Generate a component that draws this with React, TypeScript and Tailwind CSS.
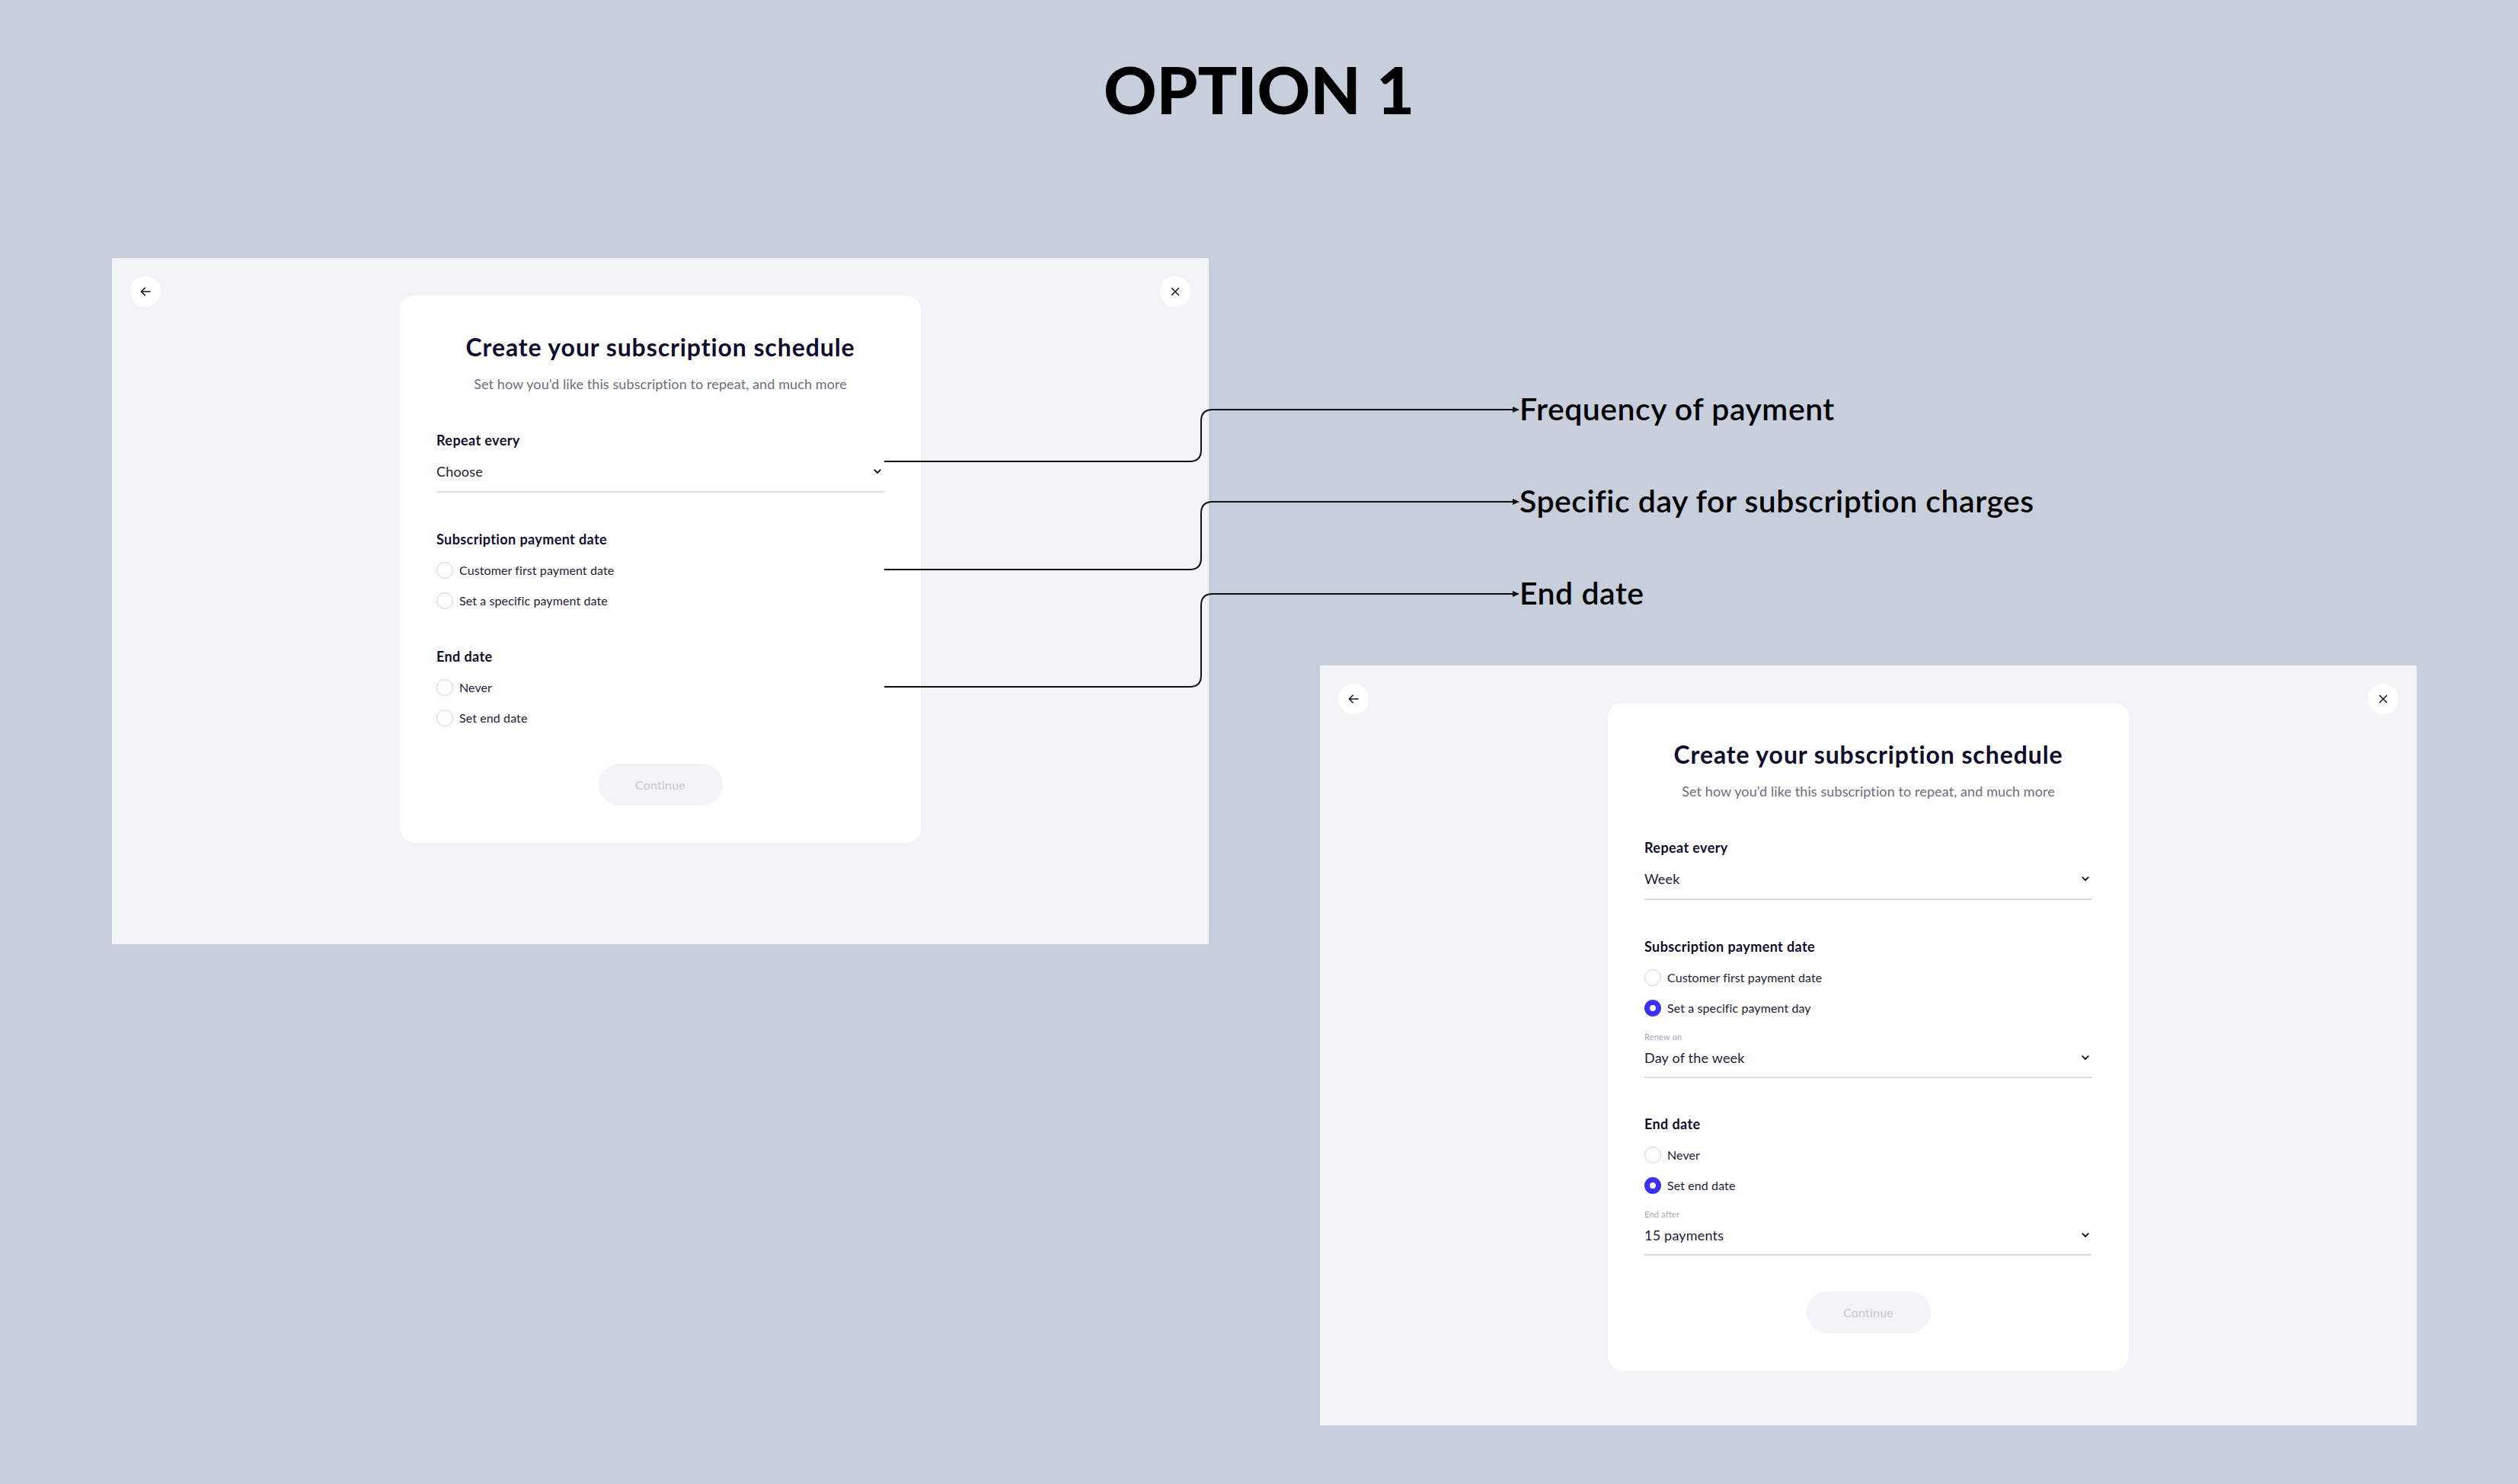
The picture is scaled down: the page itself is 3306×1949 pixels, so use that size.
import React from "react";

function Chevron() {
  return (
    <svg width="10" height="7" viewBox="0 0 10 7" className="mr-[4px] shrink-0">
      <path d="M1.2 1.2 L5 5 L8.8 1.2" fill="none" stroke="#15132e" strokeWidth="1.8" strokeLinecap="round" strokeLinejoin="round" />
    </svg>
  );
}

function Radio({ checked, label }: { checked?: boolean; label: string }) {
  return (
    <div className="flex items-center gap-[8px] h-[24px]">
      {checked ? (
        <span className="block w-[22px] h-[22px] shrink-0 rounded-full border-[7px] border-[#3b30f4] bg-white" />
      ) : (
        <span className="block w-[22px] h-[22px] shrink-0 rounded-full border border-[#cdd2df] bg-white" />
      )}
      <span className="text-[16px] leading-[24px] tracking-[0.1px] text-[#1c1a38]">{label}</span>
    </div>
  );
}

function Field({ value, pb = "pb-[14px]" }: { value: string; pb?: string }) {
  return (
    <div className={`flex items-center justify-between border-b-2 border-[#dadde7] ${pb}`}>
      <span className="text-[18px] leading-[24px] tracking-[0.2px] text-[#1c1a38]">{value}</span>
      <Chevron />
    </div>
  );
}

function Label({ children }: { children: React.ReactNode }) {
  return (
    <div className="text-[18px] leading-[24px] tracking-[0.4px] font-bold text-[#0f0d2e]">{children}</div>
  );
}

function SubLabel({ children }: { children: React.ReactNode }) {
  return <div className="text-[11px] leading-[16px] tracking-[0.2px] text-[#a3a8b8]">{children}</div>;
}

function RoundButton({ kind }: { kind: "back" | "close" }) {
  return (
    <div className="w-[40px] h-[40px] shrink-0 rounded-full bg-white flex items-center justify-center">
      {kind === "back" ? (
        <svg width="14" height="12" viewBox="0 0 14 12">
          <path d="M13 6 H1.5 M6.2 1.2 L1.4 6 L6.2 10.8" fill="none" stroke="#15132e" strokeWidth="1.6" strokeLinecap="round" strokeLinejoin="round" />
        </svg>
      ) : (
        <svg width="12" height="12" viewBox="0 0 12 12">
          <path d="M1.5 1.5 L10.5 10.5 M10.5 1.5 L1.5 10.5" fill="none" stroke="#15132e" strokeWidth="1.5" strokeLinecap="round" />
        </svg>
      )}
    </div>
  );
}

function Card({ filled }: { filled: boolean }) {
  return (
    <div className="mt-[25px] w-[684px] rounded-[20px] bg-white pt-[50px] px-[48px] pb-[49px] flex flex-col">
      <h1 className="text-center text-[32px] leading-[36px] tracking-[0.9px] font-bold text-[#0f0d2e]">
        Create your subscription schedule
      </h1>
      <p className="mt-[18px] text-center text-[18px] leading-[24px] tracking-[0.1px] text-[#6b6e80]">
        Set how you’d like this subscription to repeat, and much more
      </p>

      <div className="mt-[50px]">
        <Label>Repeat every</Label>
        <div className="mt-[17px]">
          <Field value={filled ? "Week" : "Choose"} />
        </div>
      </div>

      <div className="mt-[49px]">
        <Label>Subscription payment date</Label>
        <div className="mt-[17px] flex flex-col gap-[16px]">
          <Radio label="Customer first payment date" />
          <Radio checked={filled} label={filled ? "Set a specific payment day" : "Set a specific payment date"} />
        </div>
        {filled && (
          <div className="mt-[18px]">
            <SubLabel>Renew on</SubLabel>
            <div className="mt-[7px]">
              <Field value="Day of the week" pb="pb-[13px]" />
            </div>
          </div>
        )}
      </div>

      <div className={filled ? "mt-[48px]" : "mt-[49px]"}>
        <Label>End date</Label>
        <div className="mt-[17px] flex flex-col gap-[16px]">
          <Radio label="Never" />
          <Radio checked={filled} label="Set end date" />
        </div>
        {filled && (
          <div className="mt-[18px]">
            <SubLabel>End after</SubLabel>
            <div className="mt-[7px]">
              <Field value="15 payments" pb="pb-[13px]" />
            </div>
          </div>
        )}
      </div>

      <div className={`${filled ? "mt-[47px]" : "mt-[48px]"} flex justify-center`}>
        <button className="w-[163px] h-[55px] rounded-full bg-[#f3f4f8] text-[16px] tracking-[0.2px] text-[#c4c8d5]">
          Continue
        </button>
      </div>
    </div>
  );
}

function Panel({ filled, h }: { filled: boolean; h: string }) {
  return (
    <div className={`w-[1440px] ${h} bg-[#f3f4f8] flex items-start justify-between p-[24px]`}>
      <RoundButton kind="back" />
      <Card filled={filled} />
      <RoundButton kind="close" />
    </div>
  );
}

function Connectors() {
  const line = (y1: number, y2: number) =>
    `M1161 ${y1} H1562 Q1577 ${y1} 1577 ${y1 - 15} V${y2 + 15} Q1577 ${y2} 1592 ${y2} H1987`;
  const head = (y: number) => `M1986 ${y - 4} L1995 ${y} L1986 ${y + 4} Z`;
  return (
    <svg className="absolute left-0 top-0 pointer-events-none" width="3306" height="1949" viewBox="0 0 3306 1949">
      {[
        [606, 538],
        [748, 659],
        [902, 780],
      ].map(([a, b]) => (
        <g key={a}>
          <path d={line(a, b)} fill="none" stroke="#111111" strokeWidth="2" />
          <path d={head(b)} fill="#111111" />
        </g>
      ))}
    </svg>
  );
}

export default function App() {
  return (
    <div className="relative w-[3306px] h-[1949px] bg-[#c7cedc] font-[Lato,'Liberation_Sans',sans-serif] overflow-hidden">
      <div className="pt-[73px] text-center text-[86px] leading-[88px] font-black text-black">
        OPTION 1
      </div>
      <div className="mt-[178px] flex items-start">
        <div className="ml-[147px]">
          <Panel filled={false} h="h-[901px]" />
        </div>
        <div className="ml-[146px] flex flex-col">
          <div className="mt-[174px] ml-[262px] flex flex-col gap-[73px]">
            {["Frequency of payment", "Specific day for subscription charges", "End date"].map((t) => (
              <div key={t} className="text-[41px] leading-[48px] tracking-[0.5px] font-semibold text-black">
                {t}
              </div>
            ))}
          </div>
          <div className="mt-[71px]">
            <Panel filled={true} h="h-[998px]" />
          </div>
        </div>
      </div>
      <Connectors />
    </div>
  );
}
